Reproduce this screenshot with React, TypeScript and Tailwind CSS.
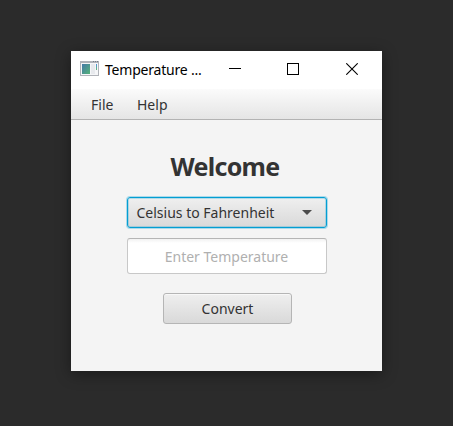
import React from 'react';

function AppIcon() {
  return (
    <svg width="19" height="15" viewBox="0 0 19 15" className="shrink-0">
      <defs>
        <linearGradient id="pane" x1="0" y1="0" x2="1" y2="1">
          <stop offset="0" stopColor="#4479a8" />
          <stop offset="1" stopColor="#55b378" />
        </linearGradient>
        <linearGradient id="bar" x1="0" y1="0" x2="0" y2="1">
          <stop offset="0" stopColor="#4f8fe0" />
          <stop offset="1" stopColor="#62ba70" />
        </linearGradient>
      </defs>
      <rect width="19" height="15" fill="#b0b3b9" />
      <rect x="1" y="2" width="17" height="12" fill="#f5f6f8" />
      <rect x="2" y="3" width="8" height="10" fill="url(#pane)" />
      <rect x="11" y="3" width="4" height="10" fill="#e7e9ed" />
      <rect x="16" y="3" width="1" height="6" fill="url(#bar)" />
      <path d="M13 .5h1M15 .5h1M17 .5h1" stroke="#777c86" />
    </svg>
  );
}

function TitleBar() {
  return (
    <header className="flex h-[38px] items-start bg-white pl-[9px]">
      <div className="pt-[10px]"><AppIcon /></div>
      <span className="ml-[6px] mt-[9px] w-[101px] text-[14px] leading-[20px] tracking-[-0.2px] text-black">Temperature ...</span>
      <div className="flex">
        <button aria-label="Minimize" className="flex h-[36px] w-[58px] items-center justify-center">
          <svg width="12" height="12" shapeRendering="crispEdges"><path d="M0 5.5h12" stroke="#000" /></svg>
        </button>
        <button aria-label="Maximize" className="flex h-[36px] w-[58px] items-center justify-center">
          <svg width="12" height="12" shapeRendering="crispEdges"><rect x=".5" y=".5" width="11" height="11" fill="none" stroke="#000" /></svg>
        </button>
        <button aria-label="Close" className="flex h-[36px] w-[60px] items-center justify-center">
          <svg width="12" height="12"><path d="M.3.3l11.4 11.4M11.7.3L.3 11.7" stroke="#000" strokeWidth="1.1" /></svg>
        </button>
      </div>
    </header>
  );
}

export default function App() {
  return (
    <main className="h-[426px] w-[453px] overflow-hidden bg-[#2b2b2b] pl-[71px] pt-[51px] font-['Noto_Sans','Open_Sans',sans-serif] text-[14px] leading-[20px] text-[#333333]">
      <section className="flex h-[320px] w-[311px] flex-col bg-[#f4f4f4] shadow-[0_3px_14px_rgba(0,0,0,0.4)] whitespace-nowrap">
        <TitleBar />
        <nav className="flex h-[31px] items-center border-b border-[#b3b3b3] bg-linear-to-b from-[#fbfbfb] to-[#e5e5e5] pl-[20px] pt-[2px]">
          <span className="w-[46px]">File</span>
          <span>Help</span>
        </nav>
        <div className="flex flex-col items-center pt-[28px]">
          <h1 className="mr-[3px] text-[25px] font-bold leading-[36px] tracking-[-0.7px]">Welcome</h1>
          <button className="mt-[13px] flex h-[31px] w-[200px] items-center justify-between rounded-[3px] border border-[#039ed3] bg-linear-to-b from-[#efefef] to-[#d9d9d9] pl-[9px] pr-[14px] shadow-[0_0_0_1px_rgba(3,158,211,0.3),inset_0_0_0_1px_rgba(3,158,211,0.25)]">
            <span>Celsius to Fahrenheit</span>
            <svg width="10" height="5"><path d="M0 0h10L5 5z" fill="#4c4c4c" /></svg>
          </button>
          <input placeholder="Enter Temperature" className="mt-[10px] h-[36px] w-[200px] rounded-[3px] border border-[#c8c8c8] border-t-[#b5b5b5] bg-linear-to-b from-[#f2f2f2] to-white to-[4px] text-center placeholder:text-[#b0b0b0]" />
          <button className="ml-[2px] mt-[19px] h-[31px] w-[129px] rounded-[3px] border border-[#b5b5b5] bg-linear-to-b from-[#efefef] to-[#d9d9d9] shadow-[inset_0_1px_0_#f8f8f8]">Convert</button>
        </div>
      </section>
    </main>
  );
}
